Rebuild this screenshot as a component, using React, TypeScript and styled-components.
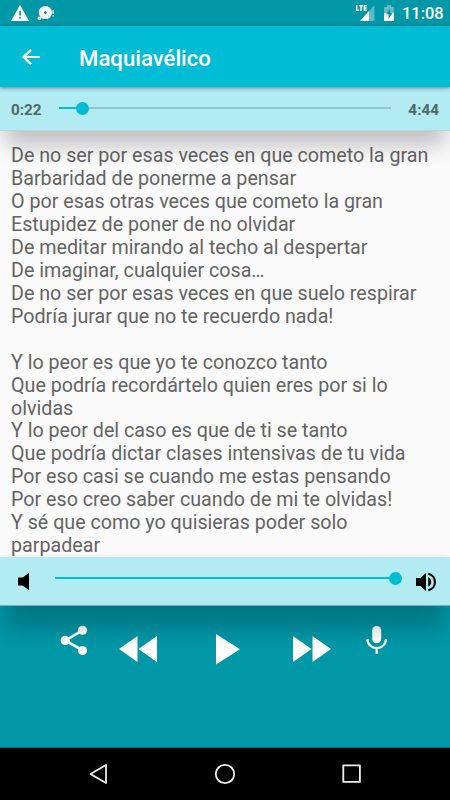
import React from "react";
import styled, { createGlobalStyle } from "styled-components";

const Global = createGlobalStyle`
  * { box-sizing: border-box; }
  body { margin: 0; font-family: Roboto, sans-serif; background: #0097a7; }
`;

const Screen = styled.div`
  display: flex;
  flex-direction: column;
  width: 450px;
  height: 800px;
  overflow: hidden;
`;

const StatusBar = styled.header`
  display: flex;
  justify-content: space-between;
  flex: none;
  height: 26px;
  background: #0097a7;
  color: #fff;
`;

const Clock = styled.time`
  width: 39px;
  margin-left: 8px;
  font-size: 16.4px;
  font-weight: 500;
  line-height: 28px;
  white-space: nowrap;
`;

const StatusGroup = styled.div`
  display: flex;
  width: 95px;
`;

const AppBar = styled.div`
  display: flex;
  align-items: center;
  flex: none;
  height: 61px;
  padding-left: 19px;
  gap: 36px;
  background: #00bcd4;
  box-shadow: 0 1px 4px rgba(0, 0, 0, 0.45);
  z-index: 3;
`;

const Title = styled.h1`
  margin: 3px 0 0;
  color: #fff;
  font-size: 22.2px;
  font-weight: 500;
  line-height: 28px;
`;

const Panel = styled.section<{ $height: number; $left: number; $right: number }>`
  display: flex;
  align-items: center;
  justify-content: space-between;
  flex: none;
  height: ${(p) => p.$height}px;
  padding: 0 ${(p) => p.$right}px 0 ${(p) => p.$left}px;
  background: #b2ebf2;
  box-shadow: 0 1px 0 #6fb3bb, 0 31px 20px -6px rgba(0, 0, 0, 0.2), 0 0 8px rgba(0, 0, 0, 0.06);
  z-index: 2;
`;

const SeekPanel = styled(Panel)`
  box-shadow: 0 1px 0 #bdd5d8, 0 20px 22px -5px rgba(0, 0, 0, 0.24);
`;

const TimeLabel = styled.span`
  padding-top: 3px;
  color: #4e6769;
  font-size: 15.3px;
  font-weight: 700;
  line-height: 20px;
`;

const SliderBox = styled.div<{ $width: number; $rise: number; $shift: number }>`
  display: flex;
  align-items: center;
  width: ${(p) => p.$width}px;
  height: 13px;
  margin-bottom: ${(p) => p.$rise}px;
  margin-left: ${(p) => p.$shift}px;
`;

const Played = styled.div<{ $width: number }>`
  width: ${(p) => p.$width}px;
  height: 2px;
  background: #00bcd4;
`;

const Thumb = styled.div`
  flex: none;
  width: 13px;
  height: 13px;
  margin-right: -6px;
  margin-left: -7px;
  border-radius: 50%;
  background: #00bcd4;
`;

const Remaining = styled.div`
  flex: 1;
  height: 2px;
  margin-left: 6px;
  background: #93c3c9;
`;

const Lyrics = styled.main`
  flex: none;
  height: 427px;
  padding: 15.4px 11px 0;
  overflow: hidden;
  background: #fafafa;
  color: #646464;
  font-size: 19.68px;
  line-height: 22.92px;
  white-space: pre;
`;

const Controls = styled.section`
  display: flex;
  flex: none;
  height: 142px;
  padding-left: 59px;
  background: #0097a7;
`;

const Glyph = styled.svg<{ $top?: number; $left?: number }>`
  display: block;
  flex: none;
  margin-top: ${(p) => p.$top ?? 0}px;
  margin-left: ${(p) => p.$left ?? 0}px;
`;

const NavBar = styled.nav`
  display: flex;
  flex: none;
  height: 53px;
  padding-left: 88px;
  border-top: 1px solid #006874;
  background: #000;
`;

const lines = [
  "De no ser por esas veces en que cometo la gran",
  "Barbaridad de ponerme a pensar",
  "O por esas otras veces que cometo la gran",
  "Estupidez de poner de no olvidar",
  "De meditar mirando al techo al despertar",
  "De imaginar, cualquier cosa…",
  "De no ser por esas veces en que suelo respirar",
  "Podría jurar que no te recuerdo nada!",
  "",
  "Y lo peor es que yo te conozco tanto",
  "Que podría recordártelo quien eres por si lo",
  "olvidas",
  "Y lo peor del caso es que de ti se tanto",
  "Que podría dictar clases intensivas de tu vida",
  "Por eso casi se cuando me estas pensando",
  "Por eso creo saber cuando de mi te olvidas!",
  "Y sé que como yo quisieras poder solo",
  "parpadear",
];

interface SliderProps {
  width: number;
  value: number;
  rise: number;
  shift?: number;
}

function Slider({ width, value, rise, shift = 0 }: SliderProps) {
  return (
    <SliderBox $width={width} $rise={rise} $shift={shift}>
      <Played $width={value} />
      <Thumb />
      {value < width && <Remaining />}
    </SliderBox>
  );
}

export default function App() {
  return (
    <>
      <Global />
      <Screen>
        <StatusBar>
          <StatusGroup>
            <Glyph $left={11} $top={5} width="18" height="16" fill="#fff">
              <path fillRule="evenodd" d="M9 0 18 16H0ZM8.2 6v4.5h1.7V6Zm0 5.8v1.7h1.7v-1.7Z" />
            </Glyph>
            <Glyph $left={8} $top={5} width="18" height="16" fill="#fff">
              <circle cx="8.4" cy="7.5" r="6.6" />
              <circle cx="2.4" cy="13.3" r="1.8" />
              <path d="M8.4 6v3M6.9 7.5h3" stroke="#0097a7" strokeWidth="1.4" />
              <path d="M15.6 5h1.2v4h-1.2zm0 5h1.2v1.4h-1.2z" />
            </Glyph>
          </StatusGroup>
          <StatusGroup>
            <Glyph $left={0} $top={4} width="20" height="18" fill="#fff">
              <path d="M19.5 1v16H5Z" opacity=".35" />
              <path d="M14 7v10H5Z" />
              <path d="M1.7 1v5.3h2.5M4.2 1.7h3.7M6 1.7v5.3M12 1.7H9.2v4.6H12M9.2 4h2.5" fill="none" stroke="#fff" strokeWidth="1.4" />
            </Glyph>
            <Glyph $left={9} $top={5} width="10" height="16">
              <path d="M3 0h4v2h3v14H0V2h3Z" fill="#62bcc7" />
              <path d="M0 8h10v8H0Z" fill="#fff" />
              <path d="M6.2 3.5 2 9.2h2.5V14l4-6H6.2Z" fill="#0097a7" />
            </Glyph>
            <Clock>11:08</Clock>
          </StatusGroup>
        </StatusBar>
        <AppBar>
          <Glyph width="24" height="24" viewBox="0 0 24 24" fill="#fff">
            <path d="M20.7 10.9v2.2H7.4l5.6 5.6-1.6 1.6L3 12l8.4-8.3L13 5.3l-5.6 5.6Z" />
          </Glyph>
          <Title>Maquiavélico</Title>
        </AppBar>
        <SeekPanel $height={43} $left={11} $right={11}>
          <TimeLabel>0:22</TimeLabel>
          <Slider width={332} value={24} rise={1} />
          <TimeLabel>4:44</TimeLabel>
        </SeekPanel>
        <Lyrics>{lines.join("\n")}</Lyrics>
        <Panel $height={48} $left={18} $right={13}>
          <Glyph $top={1} width="11" height="17">
            <path d="M0 4.5h4.5L11 0v17l-6.5-4.5H0Z" />
          </Glyph>
          <Slider width={341} value={341} rise={6} shift={5} />
          <Glyph $top={1} width="21" height="20">
            <path d="M0 6h4.5L10 1v18l-5.5-5H0Z" />
            <path d="M12.2 5.3c4 1.2 4 8.2 0 9.4Z" />
            <path d="M12.2 1.7c9 1.8 9 14.8 0 16.6" fill="none" stroke="#000" strokeWidth="2.1" />
          </Glyph>
        </Panel>
        <Controls>
          <Glyph $left={1} $top={20} width="28" height="31" fill="#fff">
            <path d="M22.5 5.3 5.5 15.4l17 10" fill="none" stroke="#fff" strokeWidth="2.7" />
            <circle cx="22.5" cy="5.3" r="4.6" />
            <circle cx="5.2" cy="15.4" r="4.6" />
            <circle cx="22.5" cy="25.5" r="4.6" />
          </Glyph>
          <Glyph $left={31} $top={31} width="38" height="26" fill="#fff">
            <path d="M18.5 0v26L0 13ZM38 0v26L19.5 13Z" />
          </Glyph>
          <Glyph $left={59} $top={29} width="24" height="31" fill="#fff">
            <path d="m0 0 24 15.3L0 30.6Z" />
          </Glyph>
          <Glyph $left={53} $top={31} width="38" height="26" fill="#fff">
            <path d="m0 0 18.5 13L0 26ZM19.5 0 38 13 19.5 26Z" />
          </Glyph>
          <Glyph $left={35} $top={20} width="22" height="30" fill="#fff">
            <rect x="6.2" y="1" width="9" height="17.3" rx="4.5" />
            <path d="M1.4 14c0 12 18.6 12 18.6 0M10.7 22.5V29" fill="none" stroke="#fff" strokeWidth="2.2" />
          </Glyph>
        </Controls>
        <NavBar>
          <Glyph $left={1} $top={15} width="20" height="22" fill="none" stroke="#eee" strokeWidth="1.8" strokeLinejoin="round">
            <path d="M17 2v18L1.5 11Z" />
          </Glyph>
          <Glyph $left={105} $top={15} width="22" height="22" fill="none" stroke="#eee" strokeWidth="1.8">
            <circle cx="11" cy="11" r="9.2" />
          </Glyph>
          <Glyph $left={105} $top={15} width="22" height="22" fill="none" stroke="#eee" strokeWidth="1.8" strokeLinejoin="round">
            <rect x="2.3" y="2.3" width="16.6" height="16.6" />
          </Glyph>
        </NavBar>
      </Screen>
    </>
  );
}
